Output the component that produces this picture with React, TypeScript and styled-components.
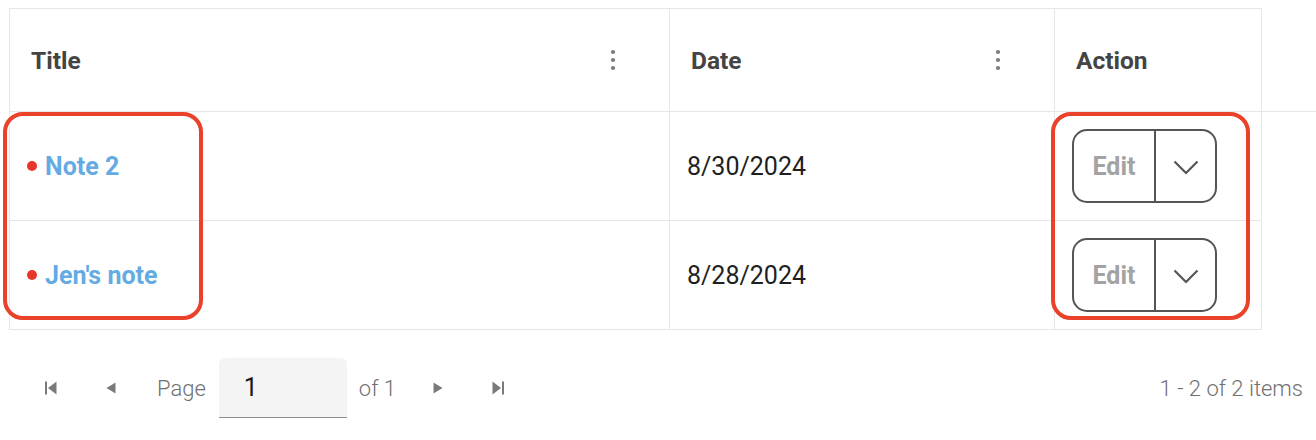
import React from 'react'
import styled, { createGlobalStyle } from 'styled-components'

const GlobalStyle = createGlobalStyle`
  html, body {
    margin: 0;
    padding: 0;
    background: #fff;
    font-family: Roboto, "Liberation Sans", sans-serif;
  }
`

const notes = [
  { title: 'Note 2', date: '8/30/2024' },
  { title: "Jen's note", date: '8/28/2024' },
]

const Kebab = () => (
  <svg width="6" height="22" viewBox="0 0 6 22">
    <circle cx="3" cy="3" r="2.1" fill="#7a7a7a" />
    <circle cx="3" cy="11" r="2.1" fill="#7a7a7a" />
    <circle cx="3" cy="19" r="2.1" fill="#7a7a7a" />
  </svg>
)

const Chevron = () => (
  <svg width="26" height="15" viewBox="0 0 26 15">
    <path d="M1.5 1.5 L13 13 L24.5 1.5" fill="none" stroke="#555" strokeWidth="2.2" />
  </svg>
)

const FirstIcon = () => (
  <svg width="12" height="14" viewBox="0 0 12 14">
    <rect x="0" y="0.5" width="2" height="13" fill="#7a7a7a" />
    <path d="M11.5 0.5 L3 7 L11.5 13.5 Z" fill="#7a7a7a" />
  </svg>
)

const PrevIcon = () => (
  <svg width="10" height="12" viewBox="0 0 10 12">
    <path d="M9.5 0.5 L0.5 6 L9.5 11.5 Z" fill="#7a7a7a" />
  </svg>
)

const NextIcon = () => (
  <svg width="10" height="12" viewBox="0 0 10 12">
    <path d="M0.5 0.5 L9.5 6 L0.5 11.5 Z" fill="#7a7a7a" />
  </svg>
)

const LastIcon = () => (
  <svg width="12" height="14" viewBox="0 0 12 14">
    <path d="M0.5 0.5 L9 7 L0.5 13.5 Z" fill="#7a7a7a" />
    <rect x="10" y="0.5" width="2" height="13" fill="#7a7a7a" />
  </svg>
)

const App = () => (
  <>
    <GlobalStyle />
    <Page>
      <Grid>
        <HeaderRow>
          <HeaderCell $width={660}>
            <HeaderTitle>Title</HeaderTitle>
            <MenuButton>
              <Kebab />
            </MenuButton>
          </HeaderCell>
          <HeaderCell $width={385}>
            <HeaderTitle>Date</HeaderTitle>
            <MenuButton>
              <Kebab />
            </MenuButton>
          </HeaderCell>
          <HeaderCell $width={208} $last>
            <HeaderTitle>Action</HeaderTitle>
          </HeaderCell>
        </HeaderRow>
        {notes.map((note) => (
          <Row key={note.title}>
            <Cell $width={660}>
              <Dot />
              <NoteLink>{note.title}</NoteLink>
            </Cell>
            <Cell $width={385}>
              <DateText>{note.date}</DateText>
            </Cell>
            <Cell $width={208} $last>
              <SplitButton>
                <EditPart>Edit</EditPart>
                <ArrowPart>
                  <Chevron />
                </ArrowPart>
              </SplitButton>
            </Cell>
          </Row>
        ))}
        <Highlight $left={-6} $width={200} />
        <Highlight $left={1042} $width={199} />
      </Grid>
      <Pager>
        <PagerButton>
          <FirstIcon />
        </PagerButton>
        <PagerButton>
          <PrevIcon />
        </PagerButton>
        <PagerText $ml={16}>Page</PagerText>
        <PageInput>1</PageInput>
        <PagerText $ml={12}>of 1</PagerText>
        <PagerButton $ml={12}>
          <NextIcon />
        </PagerButton>
        <PagerButton>
          <LastIcon />
        </PagerButton>
        <PagerInfo>1 - 2 of 2 items</PagerInfo>
      </Pager>
    </Page>
  </>
)

const Page = styled.div`
  padding: 8px 0 0 9px;
  width: 1316px;
  box-sizing: border-box;
`

const Grid = styled.div`
  position: relative;
`

const HeaderRow = styled.div`
  display: flex;
  border-bottom: 1px solid #e6e6e6;
`

const HeaderCell = styled.div<{ $width: number; $last?: boolean }>`
  box-sizing: border-box;
  width: ${(p) => p.$width}px;
  height: 103px;
  border-top: 1px solid #e6e6e6;
  border-left: 1px solid #e6e6e6;
  border-right: ${(p) => (p.$last ? '1px solid #e6e6e6' : 'none')};
  padding: 0 0 0 21px;
  display: flex;
  align-items: center;
  justify-content: space-between;
`

const HeaderTitle = styled.div`
  font-size: 24.5px;
  font-weight: 700;
  color: #444;
`

const MenuButton = styled.div`
  width: 20px;
  height: 30px;
  margin-right: 46px;
  display: flex;
  align-items: center;
  justify-content: center;
`

const Row = styled.div`
  display: flex;
`

const Cell = styled.div<{ $width: number; $last?: boolean }>`
  box-sizing: border-box;
  width: ${(p) => p.$width}px;
  height: 109px;
  border-left: 1px solid #e6e6e6;
  border-right: ${(p) => (p.$last ? '1px solid #e6e6e6' : 'none')};
  border-bottom: 1px solid #e6e6e6;
  padding: 0 0 0 17px;
  display: flex;
  align-items: center;
`

const Dot = styled.span`
  width: 10px;
  height: 10px;
  border-radius: 50%;
  background: #e8372a;
  margin-right: 8px;
  flex: none;
`

const NoteLink = styled.a`
  font-size: 25px;
  font-weight: 700;
  color: #64abe3;
  text-decoration: none;
  cursor: pointer;
`

const DateText = styled.span`
  font-size: 25px;
  color: #1f1f1f;
`

const SplitButton = styled.div`
  display: flex;
  width: 145px;
  height: 74px;
  box-sizing: border-box;
  border: 2.5px solid #555;
  border-radius: 15px;
  overflow: hidden;
`

const EditPart = styled.div`
  width: 80px;
  display: flex;
  align-items: center;
  justify-content: center;
  font-size: 25px;
  font-weight: 700;
  color: #a3a3a3;
  border-right: 2.5px solid #555;
`

const ArrowPart = styled.div`
  flex: 1;
  display: flex;
  align-items: center;
  justify-content: center;
  padding-top: 3px;
`

const Highlight = styled.div<{ $left: number; $width: number }>`
  position: absolute;
  top: 104px;
  left: ${(p) => p.$left}px;
  width: ${(p) => p.$width}px;
  height: 208px;
  box-sizing: border-box;
  border: 4.5px solid #e9412a;
  border-radius: 20px;
  pointer-events: none;
`

const Pager = styled.div`
  display: flex;
  align-items: center;
  height: 60px;
  margin-top: 28px;
  margin-left: 12px;
  padding-right: 13px;
`

const PagerButton = styled.div<{ $ml?: number }>`
  width: 60px;
  height: 40px;
  margin-left: ${(p) => p.$ml ?? 0}px;
  display: flex;
  align-items: center;
  justify-content: center;
`

const PagerText = styled.span<{ $ml: number }>`
  margin-left: ${(p) => p.$ml}px;
  font-size: 22px;
  font-weight: 300;
  color: #707070;
`

const PageInput = styled.div`
  margin-left: 13px;
  width: 128px;
  height: 60px;
  box-sizing: border-box;
  background: #f4f4f4;
  border-radius: 6px 6px 0 0;
  border-bottom: 1.5px solid #8d8d8d;
  padding-left: 25px;
  display: flex;
  align-items: center;
  font-size: 25px;
  color: #1a1a1a;
`

const PagerInfo = styled.span`
  margin-left: auto;
  font-size: 22px;
  font-weight: 300;
  color: #707070;
`

export default App
